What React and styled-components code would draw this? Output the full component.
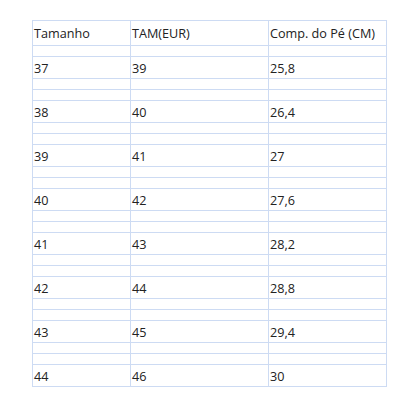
import React from 'react';
import styled, { createGlobalStyle } from 'styled-components';

const GlobalStyle = createGlobalStyle`
  html, body {
    margin: 0;
    padding: 0;
    background: #ffffff;
  }
  body {
    font-family: "Open Sans", "Noto Sans", sans-serif;
  }
`;

const Page = styled.div`
  padding: 20px 0 0 32px;
`;

const SizeTable = styled.table`
  border-collapse: collapse;
  table-layout: fixed;
  width: 354px;
  font-size: 12.65px;
  color: #222222;
`;

const Col = styled.col`
  width: ${p => p.$w}px;
`;

const Row = styled.tr`
  height: ${p => p.$h}px;
`;

const Cell = styled.td`
  border: 1px solid #cddbf3;
  padding: 0 0 0 1px;
  vertical-align: middle;
  white-space: nowrap;
  line-height: 16px;
`;

const header = ['Tamanho', 'TAM(EUR)', 'Comp. do Pé (CM)'];

const sizes = [
  ['37', '39', '25,8'],
  ['38', '40', '26,4'],
  ['39', '41', '27'],
  ['40', '42', '27,6'],
  ['41', '43', '28,2'],
  ['42', '44', '28,8'],
  ['43', '45', '29,4'],
  ['44', '46', '30'],
];

const Spacer = () => (
  <Row $h={11}>
    <Cell />
    <Cell />
    <Cell />
  </Row>
);

export default function App() {
  return (
    <Page>
      <GlobalStyle />
      <SizeTable>
        <colgroup>
          <Col $w={98} />
          <Col $w={138} />
          <Col $w={118} />
        </colgroup>
        <tbody>
          <Row $h={25}>
            {header.map(h => <Cell key={h}>{h}</Cell>)}
          </Row>
          <Spacer />
          {sizes.map((r, i) => (
            <React.Fragment key={r[0]}>
              <Row $h={22}>
                {r.map((v, j) => <Cell key={j}>{v}</Cell>)}
              </Row>
              {i < sizes.length - 1 && (
                <>
                  <Spacer />
                  <Spacer />
                </>
              )}
            </React.Fragment>
          ))}
        </tbody>
      </SizeTable>
    </Page>
  );
}
